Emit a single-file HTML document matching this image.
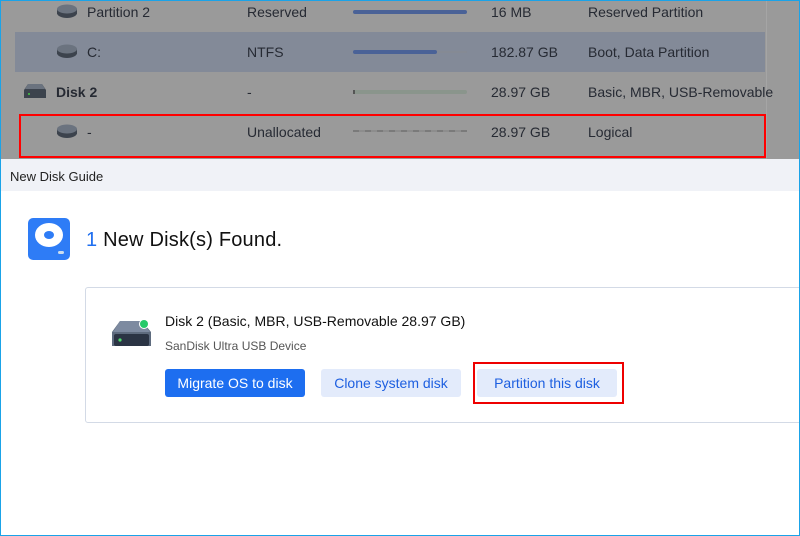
<!DOCTYPE html><html><head><style>
body{margin:0;width:800px;height:536px;overflow:hidden;font-family:"Liberation Sans",sans-serif;position:relative;background:#fff}
.top{position:absolute;left:0;top:0;width:800px;height:159px;background:#9a9a9a}
.row{position:absolute;left:0;width:766px;height:40px;font-size:14px;color:#262a33;white-space:nowrap}
.row span{position:absolute;top:12px}
.hl{background:#838a98;left:15px;width:750px}
.bar{position:absolute;left:353px;top:18px;width:114px;height:4px;border-radius:2px}
.pi{position:absolute;left:56px;top:11px}
.title{position:absolute;left:0;top:159px;width:800px;height:32px;background:#f0f2f7;font-size:13px;color:#222}
.btn{position:absolute;top:369px;height:28px;border-radius:3px;font-size:14px;line-height:28px;text-align:center;white-space:nowrap}
</style></head><body>
<div class="top">
<div style="position:absolute;left:766px;top:0;width:1px;height:159px;background:#a5a5a5"></div>
<div class="row" style="top:-8px"><svg class="pi" width="24" height="18"><ellipse cx="11" cy="10" rx="10" ry="5" fill="#3c434d"/><rect x="1" y="6" width="20" height="5" fill="#3c434d"/><ellipse cx="11" cy="6" rx="10" ry="4.5" fill="#6b737f"/></svg><span style="left:87px">Partition 2</span><span style="left:247px">Reserved</span><div class="bar" style="background:#4a6297"></div><span style="left:491px">16 MB</span><span style="left:588px">Reserved Partition</span></div>
<div class="row hl" style="top:32px;left:15px"></div>
<div class="row" style="top:32px"><svg class="pi" width="24" height="18"><ellipse cx="11" cy="10" rx="10" ry="5" fill="#3c434d"/><rect x="1" y="6" width="20" height="5" fill="#3c434d"/><ellipse cx="11" cy="6" rx="10" ry="4.5" fill="#6b737f"/></svg><span style="left:87px">C:</span><span style="left:247px">NTFS</span><div class="bar" style="background:#858a94;height:2px;top:19px"></div><div class="bar" style="background:#4a6297;width:84px"></div><span style="left:491px">182.87 GB</span><span style="left:588px">Boot, Data Partition</span></div>
<div class="row" style="top:72px"><svg style="position:absolute;left:24px;top:12px" width="22" height="14"><path d="M4 0h14l4 6v8H0V6z" fill="#3c434d"/><path d="M4 0h14l3 5H1z" fill="#6b737f"/><circle cx="5" cy="10" r="1" fill="#4c4"/></svg><span style="left:56px;font-weight:bold">Disk 2</span><span style="left:247px">-</span><div class="bar" style="background:#8a958c"></div><div style="position:absolute;left:353px;top:18px;width:2px;height:4px;background:#555"></div><span style="left:491px">28.97 GB</span><span style="left:588px">Basic, MBR, USB-Removable</span></div>
<div class="row" style="top:112px"><svg class="pi" width="24" height="18"><ellipse cx="11" cy="10" rx="10" ry="5" fill="#3c434d"/><rect x="1" y="6" width="20" height="5" fill="#3c434d"/><ellipse cx="11" cy="6" rx="10" ry="4.5" fill="#6b737f"/></svg><span style="left:87px">-</span><span style="left:247px">Unallocated</span><div class="bar" style="height:2px;border-radius:0;background:repeating-linear-gradient(90deg,#7a7a7a 0 6px,#8d8d8d 6px 12px)"></div><span style="left:491px">28.97 GB</span><span style="left:588px">Logical</span></div>
<div style="position:absolute;left:19px;top:114px;width:743px;height:40px;border:2px solid #f00"></div>
</div>
<div class="title"><span style="position:absolute;left:10px;top:10px">New Disk Guide</span></div>
<svg style="position:absolute;left:28px;top:218px" width="42" height="42"><rect x="0" y="0" width="42" height="42" rx="5" fill="#2e7cf6"/><ellipse cx="21" cy="17" rx="14" ry="12" fill="#fff"/><ellipse cx="21" cy="17" rx="5" ry="4" fill="#2e7cf6"/><rect x="30" y="33" width="6" height="3" rx="1.5" fill="#cde"/></svg>
<div style="position:absolute;left:86px;top:229px;font-size:20px;color:#111;white-space:nowrap;letter-spacing:0.2px"><span style="color:#1f6ff0">1</span> New Disk(s) Found.</div>
<div style="position:absolute;left:85px;top:287px;width:720px;height:134px;border:1px solid #d3dae6;border-radius:3px"></div>
<svg style="position:absolute;left:111px;top:318px" width="44" height="32"><path d="M9 3h22l9 11v14H1V14z" fill="#5e6b7e"/><path d="M9 3h22l8 11H2z" fill="#7d8aa0"/><rect x="3" y="16" width="35" height="12" rx="2" fill="#2b3444"/><circle cx="9" cy="22" r="1.6" fill="#4ddc6a"/><circle cx="33" cy="6" r="5" fill="#fff"/><circle cx="33" cy="6" r="4" fill="#27c96a"/></svg>
<div style="position:absolute;left:165px;top:313px;font-size:14px;color:#111;white-space:nowrap">Disk 2 (Basic, MBR, USB-Removable 28.97 GB)</div>
<div style="position:absolute;left:165px;top:339px;font-size:12px;color:#555">SanDisk Ultra USB Device</div>
<div class="btn" style="left:165px;width:140px;background:#1d6ef0;color:#fff">Migrate OS to disk</div>
<div class="btn" style="left:321px;width:140px;background:#e3ebfb;color:#1d5fe0">Clone system disk</div>
<div class="btn" style="left:477px;width:140px;background:#e3ebfb;color:#1d5fe0">Partition this disk</div>
<div style="position:absolute;left:473px;top:362px;width:147px;height:38px;border:2px solid #e00"></div>
<div style="position:absolute;left:0;top:0;width:798px;height:534px;border:1px solid #1aa3e8;pointer-events:none"></div>
</body></html>
